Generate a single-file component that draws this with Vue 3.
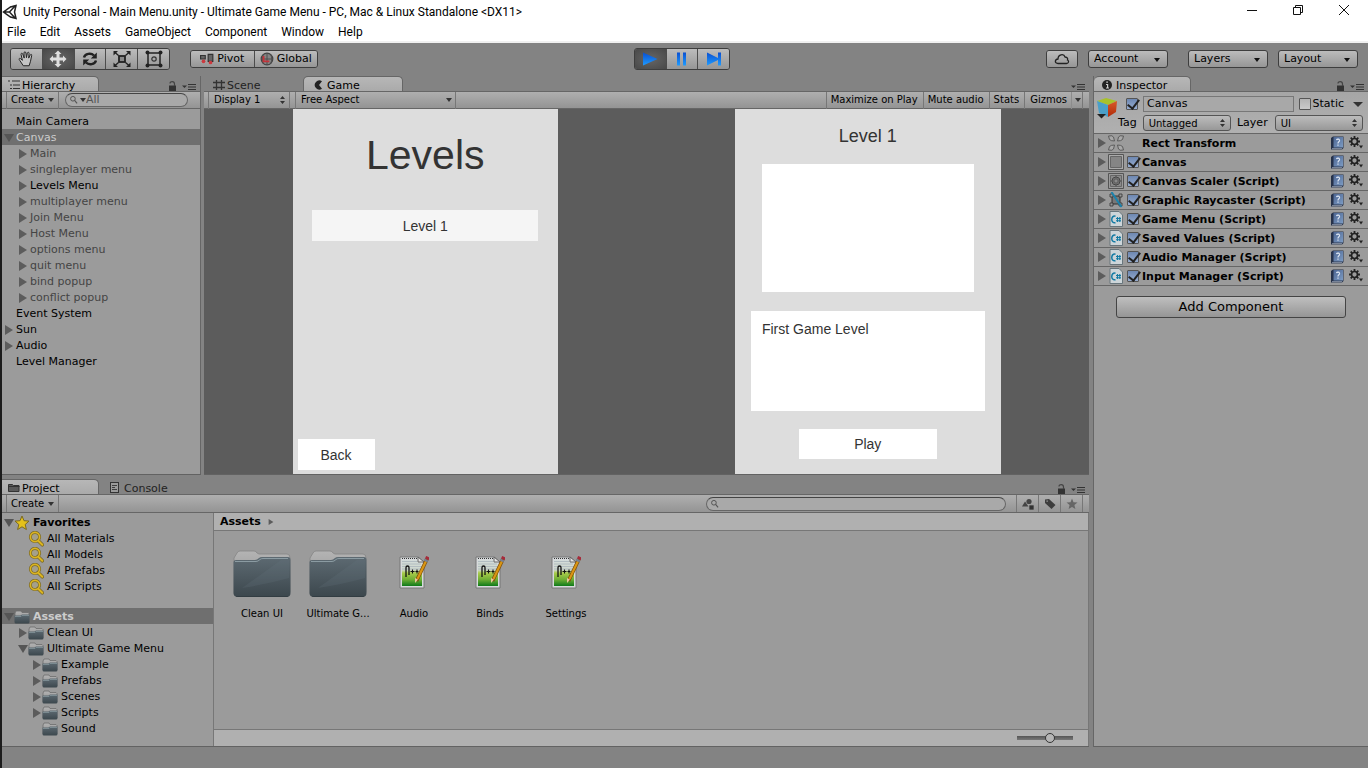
<script setup>
import { ref } from 'vue'

const menus = ['File', 'Edit', 'Assets', 'GameObject', 'Component', 'Window', 'Help']
const tools = ['hand', 'move', 'rotate', 'scale', 'rect']
const plays = ['play', 'pause', 'step']
const hierarchy = [
  { name: 'Main Camera', level: 0 },
  { name: 'Canvas', level: 0, arrow: 'open', selected: true },
  { name: 'Main', level: 1, arrow: 'closed', dim: true },
  { name: 'singleplayer menu', level: 1, arrow: 'closed', dim: true },
  { name: 'Levels Menu', level: 1, arrow: 'closed' },
  { name: 'multiplayer menu', level: 1, arrow: 'closed', dim: true },
  { name: 'Join Menu', level: 1, arrow: 'closed', dim: true },
  { name: 'Host Menu', level: 1, arrow: 'closed', dim: true },
  { name: 'options menu', level: 1, arrow: 'closed', dim: true },
  { name: 'quit menu', level: 1, arrow: 'closed', dim: true },
  { name: 'bind popup', level: 1, arrow: 'closed', dim: true },
  { name: 'conflict popup', level: 1, arrow: 'closed', dim: true },
  { name: 'Event System', level: 0 },
  { name: 'Sun', level: 0, arrow: 'closed' },
  { name: 'Audio', level: 0, arrow: 'closed' },
  { name: 'Level Manager', level: 0 }
]
const favorites = [
  { name: 'Favorites', level: 0, arrow: 'open', icon: 'star', bold: true },
  { name: 'All Materials', level: 1, icon: 'lens' },
  { name: 'All Models', level: 1, icon: 'lens' },
  { name: 'All Prefabs', level: 1, icon: 'lens' },
  { name: 'All Scripts', level: 1, icon: 'lens' }
]
const folders = [
  { name: 'Assets', level: 0, arrow: 'open', icon: 'folder', bold: true, selected: true },
  { name: 'Clean UI', level: 1, arrow: 'closed', icon: 'folder' },
  { name: 'Ultimate Game Menu', level: 1, arrow: 'open', icon: 'folder' },
  { name: 'Example', level: 2, arrow: 'closed', icon: 'folder' },
  { name: 'Prefabs', level: 2, arrow: 'closed', icon: 'folder' },
  { name: 'Scenes', level: 2, arrow: 'closed', icon: 'folder' },
  { name: 'Scripts', level: 2, arrow: 'closed', icon: 'folder' },
  { name: 'Sound', level: 2, icon: 'folder' }
]
const assets = [
  { name: 'Clean UI', icon: 'bigfolder' },
  { name: 'Ultimate G...', icon: 'bigfolder' },
  { name: 'Audio', icon: 'doc' },
  { name: 'Binds', icon: 'doc' },
  { name: 'Settings', icon: 'doc' }
]
const components = ref([
  { name: 'Rect Transform', icon: 'c-rect' },
  { name: 'Canvas', icon: 'c-canvas', on: true },
  { name: 'Canvas Scaler (Script)', icon: 'c-scaler', on: true },
  { name: 'Graphic Raycaster (Script)', icon: 'c-ray', on: true },
  { name: 'Game Menu (Script)', icon: 'c-cs', on: true },
  { name: 'Saved Values (Script)', icon: 'c-cs', on: true },
  { name: 'Audio Manager (Script)', icon: 'c-cs', on: true },
  { name: 'Input Manager (Script)', icon: 'c-cs', on: true }
])
const activeTool = ref('move')
const objectName = ref('Canvas')
const objectOn = ref(true)
const isStatic = ref(false)
const zoom = ref(60)
</script>

<template>
  <div class="app">
    <svg class="defs" aria-hidden="true">
      <defs>
        <linearGradient id="g-folder" x1="0" y1="0" x2="0" y2="1"><stop offset="0" stop-color="#5d6a72" /><stop offset="1" stop-color="#3c474d" /></linearGradient>
        <linearGradient id="g-tab" x1="0" y1="0" x2="0" y2="1"><stop offset="0" stop-color="#b4b4b4" /><stop offset="1" stop-color="#8c8c8c" /></linearGradient>
        <linearGradient id="g-green" x1="0" y1="0" x2="0" y2="1"><stop offset="0" stop-color="#d4dcda" /><stop offset=".38" stop-color="#cfd8cc" /><stop offset=".5" stop-color="#a9cc4a" /><stop offset=".75" stop-color="#6fae35" /><stop offset="1" stop-color="#0f7a1a" /></linearGradient>
        <linearGradient id="g-blue" x1="0" y1="0" x2="0" y2="1"><stop offset="0" stop-color="#0a4fd0" /><stop offset="1" stop-color="#1e9bff" /></linearGradient>
        <linearGradient id="g-book" x1="0" y1="0" x2="1" y2="1"><stop offset="0" stop-color="#4c6592" /><stop offset="1" stop-color="#7d9cc4" /></linearGradient>
        <linearGradient id="g-red" x1="0" y1="0" x2="0" y2="1"><stop offset="0" stop-color="#d85a28" /><stop offset="1" stop-color="#b02a08" /></linearGradient>
      </defs>
      <symbol id="i-closed" viewBox="0 0 10 10"><path d="M1 0v10l8-5z" fill="#5c5c5c" /></symbol>
      <symbol id="i-open" viewBox="0 0 10 10"><path d="M0 1h10L5 9z" fill="#555" /></symbol>
      <symbol id="i-unity" viewBox="0 0 16 16"><path d="M14 1.500 8.500 3 1.500 8l7 5 5.500 1.500L12.500 8z M2 8h5.500M7.500 8l5.500-6M7.500 8l5.500 6M4 6l5-3.500M4 10l5 3.500" fill="none" stroke="#222" stroke-width="1.500" /></symbol>
      <symbol id="i-hand" viewBox="0 0 20 18"><path d="M7 16.500 3 10.500c-1.500-2 0-3 1.500-1.500L6 10.500 4.500 4c-.3-1.600 1.400-1.900 1.900-.5L8 8 7.800 2.300c0-1.700 1.900-1.700 2.100 0L10.500 7.500l1-5c.4-1.500 2-1.200 1.900.4L13 8l1.700-3.500c.7-1.300 2-.6 1.600.8L15 11.500l-1.500 5z" fill="#c4c4c4" stroke="#222" stroke-width="1.100" /></symbol>
      <symbol id="i-move" viewBox="0 0 18 18"><path d="M9 .5 12.500 4H10.500v3.500H14V5.500L17.500 9 14 12.500v-2h-3.500V14h2L9 17.500 5.500 14h2v-3.500H4v2L.5 9 4 5.500v2h3.500V4h-2z" fill="#dedede" /></symbol>
      <symbol id="i-rotate" viewBox="0 0 18 18"><path d="M3 7.500C4 3.500 10 2.500 13 5.500M15 10.500C14 14.500 8 15.500 5 12.500" fill="none" stroke="#222" stroke-width="2.400" /><path d="M15.800 2.500v6h-6zM2.200 15.500v-6h6z" fill="#222" /></symbol>
      <symbol id="i-scale" viewBox="0 0 18 18"><rect x="6" y="6" width="6" height="6" fill="#888" stroke="#222" stroke-width="1.800" /><path d="m1.500 2 4 3.500M16.500 2l-4 3.500M1.500 16l4-3.500M16.500 16l-4-3.500" stroke="#222" stroke-width="1.300" /><path d="M.5 1H5L.5 5.500zM17.500 1H13l4.500 4.500zM.5 17H5L.5 12.500zM17.500 17H13l4.500-4.500z" fill="#222" /></symbol>
      <symbol id="i-rect" viewBox="0 0 18 18"><rect x="3" y="3" width="12" height="12" fill="none" stroke="#222" stroke-width="1.500" /><g fill="#222"><circle cx="2.500" cy="2.500" r="2" /><circle cx="15.500" cy="2.500" r="2" /><circle cx="2.500" cy="15.500" r="2" /><circle cx="15.500" cy="15.500" r="2" /></g><circle cx="9" cy="9" r="2.200" fill="none" stroke="#333" stroke-width="1.200" /></symbol>
      <symbol id="i-play" viewBox="0 0 18 18"><path d="M2 2.500v13L16.500 9z" fill="url(#g-blue)" /></symbol>
      <symbol id="i-pause" viewBox="0 0 18 18"><path d="M4 2.500h3v13H4zM10 2.500h3v13h-3z" fill="url(#g-blue)" /></symbol>
      <symbol id="i-step" viewBox="0 0 18 18"><path d="M2 2.500v13L13 10v5.500h3v-13h-3V8z" fill="url(#g-blue)" /></symbol>
      <symbol id="i-pivot" viewBox="0 0 12 10"><path d="M.5 2h4v3h-4zM7 1h4v6H7z" fill="#666" stroke="#333" /><circle cx="3" cy="7" r="1.600" fill="#cc3a3f" /><circle cx="9" cy="8" r="1.600" fill="#cc3a3f" /></symbol>
      <symbol id="i-global" viewBox="0 0 12 12"><circle cx="6" cy="6" r="5" fill="#848484" stroke="#444" /><path d="M1 6h10M6 1v10M3 2c-1.500 3-1.500 5 0 8M9 2c1.500 3 1.500 5 0 8" fill="none" stroke="#4b4b4b" stroke-width=".8" /><path d="M3 3.500v4.500h5" fill="none" stroke="#c4333a" stroke-width="1.600" /></symbol>
      <symbol id="i-cloud" viewBox="0 0 16 12"><path d="M4 10.500C.5 10.500.5 6.500 4 6c0-5 6-5.500 7-2 2.500.2 3 2 2.500 3 2 1 1 3.500-1 3.500z" fill="none" stroke="#222" stroke-width="1.300" /></symbol>
      <symbol id="i-list" viewBox="0 0 12 10"><path d="M0 1h2M4 1h8M2 5h2M5 5h7M2 8.500h2M5 8.500h7" stroke="#333" stroke-width="1.200" /></symbol>
      <symbol id="i-scene" viewBox="0 0 12 12"><path d="M3.500 1v10M8.500 1v10M0 3.500h12M0 8.500h12" stroke="#333" stroke-width="1.300" /></symbol>
      <symbol id="i-game" viewBox="0 0 10 10"><path d="M8 1.200A4.600 4.600 0 1 0 8 8.800L5 5z" fill="#222" /></symbol>
      <symbol id="i-info" viewBox="0 0 10 10"><circle cx="5" cy="5" r="5" fill="#222" /><path d="M4 4.500h1.600V8M4 8h3M4.300 2.200h1.600" stroke="#ccc" stroke-width="1.200" fill="none" /></symbol>
      <symbol id="i-proj" viewBox="0 0 12 10"><path d="M.5 8.500v-7h4l1 1h5.500v6zM.5 3.500h11" fill="#5a5a5a" stroke="#333" /></symbol>
      <symbol id="i-console" viewBox="0 0 10 12"><rect x=".5" y=".5" width="8" height="10" fill="#9a9a9a" stroke="#333" /><path d="M2 3.500h5M2 5.500h3M2 7.500h5" stroke="#333" stroke-width=".9" /></symbol>
      <symbol id="i-lock" viewBox="0 0 8 10"><path d="M1 4.500h7V10H1z" fill="#333" /><path d="M2 2.500C2 0 6.500 0 6.500 3v2" fill="none" stroke="#444" stroke-width="1.200" /></symbol>
      <symbol id="i-pane" viewBox="0 0 14 7"><path d="M0 2h5L2.500 4.500z" fill="#333" /><path d="M6 1h8M6 3.500h8M6 6h8" stroke="#333" stroke-width="1.200" /></symbol>
      <symbol id="i-search" viewBox="0 0 12 10"><circle cx="3.500" cy="3.500" r="2.800" fill="none" stroke="#555" stroke-width="1.200" /><path d="m5.500 5.500 3 3.500" stroke="#555" stroke-width="1.400" /></symbol>
      <symbol id="i-shapes" viewBox="0 0 12 12"><path d="M0 8.500 3 3.500l3.500 5z" fill="#444" /><circle cx="7" cy="3.500" r="2.600" fill="#444" /><path d="M7 7h5v5H7z" fill="#333" stroke="#999" stroke-width=".7" /></symbol>
      <symbol id="i-tag" viewBox="0 0 12 12"><path d="M1 1.500 5 1l6.500 6L7.500 11 1 5zM2.500 2.500v1.300h1.300V2.500z" fill="#3d3d3d" fill-rule="evenodd" /></symbol>
      <symbol id="i-fav" viewBox="0 0 12 12"><path d="m6 .5 1.500 3.800 4 .2-3.100 2.600 1 4L6 8.900l-3.400 2.200 1-4L.5 4.500l4-.2z" fill="#666" /></symbol>
      <symbol id="i-star" viewBox="0 0 16 16"><path d="m8 1 2 4.700 5 .4-3.800 3.400 1.200 5L8 11.800l-4.400 2.700 1.200-5L1 6.100l5-.4z" fill="#e4c11b" stroke="#7b6a20" /></symbol>
      <symbol id="i-lens" viewBox="0 0 16 16"><circle cx="7" cy="6" r="4.600" fill="#a5a08a" stroke="#7b6a28" stroke-width="3" /><path d="m10 9.500 4.300 4.300" stroke="#7b6a28" stroke-width="3.600" stroke-linecap="round" /><circle cx="7" cy="6" r="4.600" fill="none" stroke="#dcb520" stroke-width="1.600" /><path d="m10.500 10 3.800 3.800" stroke="#dcb520" stroke-width="2" stroke-linecap="round" /></symbol>
      <symbol id="i-folder" viewBox="0 0 16 14"><path d="M1 12V3l1-2h5l1 1.500h6l1 1V12z" fill="url(#g-tab)" stroke="#6c6c6c" stroke-width=".8" /><path d="M.5 5.500h6L8 4.500h7.500V12q0 1.500-1.500 1.500H2Q.5 13.500.5 12z" fill="url(#g-folder)" /><path d="M1 6.500h6L8 5.500h7" fill="none" stroke="#84949b" stroke-width=".8" /></symbol>
      <symbol id="i-bigfolder" viewBox="0 0 58 50"><path d="M1 44V8l3-5q1-2 3-2h14q2 0 3 2l2 1h28q3 0 3 4v34z" fill="url(#g-tab)" stroke="#858585" stroke-width=".8" /><path d="M.5 12q0-2 2.500-2h19q2 0 4-2 1-1 3-1h26q2.500 0 2.500 3v33q0 4-4 4H5q-4.500 0-4.500-4z" fill="url(#g-folder)" /><path d="M2 11.500h21q2 0 4-2 1-1 3-1h25" fill="none" stroke="#8b9ba2" /><path d="M9 38 48 10h8v18Q35 34 9 38" fill="#6b7981" opacity=".2" /><path d="M3 46.500h52" stroke="#2c363b" opacity=".6" /></symbol>
      <symbol id="i-doc" viewBox="0 0 30 34"><path d="M1 1h18l6 5v26H1z" fill="#d7dadc" stroke="#777" /><path d="M3 4h15l5 4v22H3z" fill="url(#g-green)" /><path d="M3 5.500h15M3 8h19M3 10.500h20M3 13h20" stroke="#a9b5bd" stroke-width=".8" /><path d="M3 2.500h15" stroke="#333" stroke-dasharray="1 1" /><path d="M19 1v5h6z" fill="#e5e5e5" stroke="#666" /><path d="M7 21v-9.500q0-1.500 1.500-1.500t1.500 1.500V19" fill="none" stroke="#111" stroke-width="1.300" /><path d="M11.500 15.500h4M13.500 13.500v4M16.500 15.500h3M18 13.500v4" fill="none" stroke="#111" stroke-width="1.100" /><path d="M28 3 17.500 25" stroke="#7c4b09" stroke-width="3.600" /><path d="M27.500 4 18.500 23" stroke="#d99614" stroke-width="2.200" /><path d="m16 22 3 1.500-3 3.500z" fill="#e8c79c" /><path d="m29 .8-1.200 2.500" stroke="#a62a3a" stroke-width="4" /><path d="m27.500 3.500-1 2" stroke="#777f91" stroke-width="4" /></symbol>
      <symbol id="i-cube" viewBox="0 0 22 22"><path d="M1 4 10 1l11 3-9 4z" fill="#a8c22b" /><path d="M1 4l11 4v12L3 16z" fill="#4a9fc8" /><path d="M12 8l9-4-1 11-8 5z" fill="url(#g-red)" /><path d="M1 17h9l-4.500 4.500z" fill="#222" /></symbol>
      <symbol id="i-book" viewBox="0 0 14 14"><path d="M1 2 3 .5h10.500v11.500L12 13.500H1z" fill="#26324a" /><path d="M3.500 1H13v10.500H3.500z" fill="url(#g-book)" /><path d="M2 12.700h10" stroke="#a8b2c4" stroke-width=".8" /><path d="M6.500 4.200c.5-1.700 3.500-1.200 3 .7-.3 1-1.500 1-1.500 2.500M8 8.500v1.300" fill="none" stroke="#dfe7f3" stroke-width="1.200" /></symbol>
      <symbol id="i-gear" viewBox="0 0 14 14"><circle cx="5.500" cy="5.500" r="3" fill="none" stroke="#222" stroke-width="1.700" /><path d="M5.500 0v2.500M5.500 8.500V11M0 5.500h2.500M8.500 5.500H11M1.700 1.700l1.600 1.600M7.700 7.700l1.600 1.600M9.300 1.700 7.700 3.300M3.300 7.700 1.700 9.300" stroke="#222" stroke-width="1.800" /><path d="M10 9.500h4l-2 3z" fill="#222" /></symbol>
      <symbol id="i-c-rect" viewBox="0 0 16 16"><path d="M.5 1q4-1 5 1l1 4Q3 6 1.500 4.500zM15.500 1q-4-1-5 1l-1 4q3.500 0 5-1.500zM.5 15q4 1 5-1l1-4Q3 10 1.500 11.500zM15.500 15q-4 1-5-1l-1-4q3.500 0 5 1.500z" fill="#a8a8a8" stroke="#555" stroke-width=".9" /></symbol>
      <symbol id="i-c-canvas" viewBox="0 0 16 16"><path d="M.5.5h15v15H.5z" fill="#aaa" stroke="#555" /><path d="M2.500 2.500h11v11h-11z" fill="#858585" stroke="#666" /></symbol>
      <symbol id="i-c-scaler" viewBox="0 0 16 16"><path d="M.5.5h15v15H.5z" fill="#9b9b9b" stroke="#555" /><path d="M2.500 2.500h11v11h-11z" fill="#8a8a8a" stroke="#666" /><circle cx="8" cy="8" r="4" fill="none" stroke="#444" /><path d="M6 6h4v4H6zM8 2.500v3M8 10.500v3M2.500 8h3M10.500 8h3" fill="none" stroke="#555" /></symbol>
      <symbol id="i-c-ray" viewBox="0 0 16 16"><path d="M4 4h8v8H4z" fill="#777" stroke="#333" /><path d="M2 2h3v3H2zM11 2h3v3h-3zM2 11h3v3H2zM11 11h3v3h-3z" fill="#999" stroke="#333" stroke-width=".8" /><path d="m3.500 0 10 15" stroke="#1a83ad" stroke-width="2" /></symbol>
      <symbol id="i-c-cs" viewBox="0 0 16 16"><path d="M2 .5h9L14.500 4v11.500H2z" fill="#cdd5d9" stroke="#68767d" /><path d="M7.500 5.200C2.500 4 2.500 13 7.500 11.700" fill="none" stroke="#147ba4" stroke-width="1.500" /><path d="M9.500 6v5M11.800 6v5M8 7.500h5M8 9.700h5" stroke="#147ba4" stroke-width="1.100" /></symbol>
      <symbol id="i-min" viewBox="0 0 12 12"><path d="M1 6.500h10" stroke="#111" /></symbol>
      <symbol id="i-max" viewBox="0 0 12 12"><path d="M1.500 3.500h7v7h-7zM3.500 3.500v-2h7v7h-2" fill="none" stroke="#111" /></symbol>
      <symbol id="i-close" viewBox="0 0 12 12"><path d="m1 1 10 10M11 1 1 11" stroke="#111" /></symbol>
    </svg>

    <header class="titlebar">
      <svg class="s16"><use href="#i-unity" /></svg>
      <h1>Unity Personal - Main Menu.unity - Ultimate Game Menu - PC, Mac &amp; Linux Standalone &lt;DX11&gt;</h1>
      <div class="wincontrols">
        <button v-for="w in ['min', 'max', 'close']" :key="w" :aria-label="w"><svg class="s12"><use :href="'#i-' + w" /></svg></button>
      </div>
    </header>
    <nav class="menubar"><a v-for="m in menus" :key="m" href="#">{{ m }}</a></nav>

    <div class="toolbar">
      <div class="side">
        <div class="group tall tools">
          <button v-for="t in tools" :key="t" :class="{ on: t === activeTool }" :aria-label="t" @click="activeTool = t"><svg class="s18"><use :href="'#i-' + t" /></svg></button>
        </div>
        <div class="group modes">
          <button><svg class="s14"><use href="#i-pivot" /></svg>Pivot</button>
          <button><svg class="s14"><use href="#i-global" /></svg>Global</button>
        </div>
      </div>
      <div class="group tall plays">
        <button v-for="p in plays" :key="p" :class="{ on: p === 'play' }" :aria-label="p"><svg class="s18"><use :href="'#i-' + p" /></svg></button>
      </div>
      <div class="side right">
        <div class="group cloud"><button aria-label="Cloud"><svg class="s16"><use href="#i-cloud" /></svg></button></div>
        <div class="drop"><select aria-label="Account"><option>Account</option></select></div>
        <div class="drop apart"><select aria-label="Layers"><option>Layers</option></select></div>
        <div class="drop"><select aria-label="Layout"><option>Layout</option></select></div>
      </div>
    </div>

    <main class="work">
      <div class="left">
        <div class="upper">
          <section class="panel hier">
            <div class="tabs">
              <button class="tab on"><svg class="s12"><use href="#i-list" /></svg>Hierarchy</button>
              <span class="ends"><svg class="s10"><use href="#i-lock" /></svg><svg class="s14"><use href="#i-pane" /></svg></span>
            </div>
            <div class="bar">
              <button class="cell create">Create<i class="tri" /></button>
              <label class="search small"><svg class="s10"><use href="#i-search" /></svg><i class="tri" /><input type="text" placeholder="All" aria-label="Search hierarchy" /></label>
            </div>
            <ul class="tree hierlist">
              <li v-for="n in hierarchy" :key="n.name" :class="['l' + n.level, { sel: n.selected, dim: n.dim }]">
                <span class="arr"><svg v-if="n.arrow" class="s10"><use :href="'#i-' + n.arrow" /></svg></span>{{ n.name }}
              </li>
            </ul>
          </section>

          <section class="panel game">
            <div class="tabs">
              <button class="tab scene"><svg class="s12"><use href="#i-scene" /></svg>Scene</button>
              <button class="tab on"><svg class="s10"><use href="#i-game" /></svg>Game</button>
              <span class="ends"><svg class="s14"><use href="#i-pane" /></svg></span>
            </div>
            <div class="bar">
              <div class="pick display"><select aria-label="Display"><option>Display 1</option></select><i class="updown" /></div>
              <div class="pick aspect"><select aria-label="Aspect"><option>Free Aspect</option></select><i class="tri" /></div>
              <div class="rightcells">
                <button class="cell">Maximize on Play</button>
                <button class="cell">Mute audio</button>
                <button class="cell">Stats</button>
                <button class="cell gizmos">Gizmos<span class="more"><i class="tri" /></span></button>
              </div>
            </div>
            <div class="view">
              <div class="card levels">
                <h2>Levels</h2>
                <button class="gbtn level">Level 1</button>
                <button class="gbtn back">Back</button>
              </div>
              <div class="card detail">
                <h3>Level 1</h3>
                <div class="preview" />
                <p>First Game Level</p>
                <button class="gbtn playbtn">Play</button>
              </div>
            </div>
          </section>
        </div>

        <section class="panel project">
          <div class="tabs">
            <button class="tab on"><svg class="s12"><use href="#i-proj" /></svg>Project</button>
            <button class="tab"><svg class="s12"><use href="#i-console" /></svg>Console</button>
            <span class="ends"><svg class="s10"><use href="#i-lock" /></svg><svg class="s14"><use href="#i-pane" /></svg></span>
          </div>
          <div class="bar">
            <button class="cell create">Create<i class="tri" /></button>
            <label class="search wide"><svg class="s10"><use href="#i-search" /></svg><input type="text" aria-label="Search assets" /></label>
            <div class="rightcells">
              <button v-for="f in ['shapes', 'tag', 'fav']" :key="f" class="cell icon" :aria-label="f"><svg class="s12"><use :href="'#i-' + f" /></svg></button>
            </div>
          </div>
          <div class="browser">
            <div class="folders">
              <ul v-for="(list, i) in [favorites, folders]" :key="i" class="tree">
                <li v-for="n in list" :key="n.name" :class="['l' + n.level, { sel: n.selected, bold: n.bold }]">
                  <span class="arr"><svg v-if="n.arrow" class="s10"><use :href="'#i-' + n.arrow" /></svg></span>
                  <svg class="s16"><use :href="'#i-' + n.icon" /></svg>{{ n.name }}
                </li>
              </ul>
            </div>
            <div class="content">
              <div class="crumb">Assets<svg class="s6"><use href="#i-closed" /></svg></div>
              <ul class="grid">
                <li v-for="a in assets" :key="a.name"><svg :class="a.icon"><use :href="'#i-' + a.icon" /></svg><span>{{ a.name }}</span></li>
              </ul>
              <div class="foot"><input v-model="zoom" type="range" min="0" max="100" aria-label="Icon size" /></div>
            </div>
          </div>
        </section>
      </div>

      <aside class="panel inspector">
        <div class="tabs">
          <button class="tab on"><svg class="s10"><use href="#i-info" /></svg>Inspector</button>
          <span class="ends"><svg class="s10"><use href="#i-lock" /></svg><svg class="s14"><use href="#i-pane" /></svg></span>
        </div>
        <div class="head">
          <svg class="cube"><use href="#i-cube" /></svg>
          <div class="fields">
            <div class="line one">
              <input v-model="objectOn" class="check" type="checkbox" aria-label="Active" />
              <input v-model="objectName" class="name" type="text" aria-label="Name" />
              <label class="static"><input v-model="isStatic" class="check" type="checkbox" />Static</label>
              <i class="tri big" />
            </div>
            <div class="line two">
              <label for="tag">Tag</label>
              <div class="mini"><select id="tag"><option>Untagged</option></select><i class="updown" /></div>
              <label for="layer" class="layer">Layer</label>
              <div class="mini"><select id="layer"><option>UI</option></select><i class="updown" /></div>
            </div>
          </div>
        </div>
        <ul class="comps">
          <li v-for="c in components" :key="c.name">
            <svg class="s10"><use href="#i-closed" /></svg>
            <svg class="s16"><use :href="'#i-' + c.icon" /></svg>
            <label><span class="slot"><input v-if="c.on !== undefined" v-model="c.on" class="check" type="checkbox" /></span><span class="title">{{ c.name }}</span></label>
            <button aria-label="Help"><svg class="s14"><use href="#i-book" /></svg></button>
            <button aria-label="Settings"><svg class="s14"><use href="#i-gear" /></svg></button>
          </li>
        </ul>
        <button class="add">Add Component</button>
      </aside>
    </main>
    <footer class="status" />
  </div>
</template>

<style>
body { margin: 0; background: #838383; }
</style>

<style scoped>
.app { display: flex; flex-direction: column; min-height: 100vh; box-sizing: border-box; border-left: 2px solid #1c1c1c; background: #838383; color: #000; font: 11px/16px "DejaVu Sans", Verdana, sans-serif; }
.app * { box-sizing: border-box; }
.defs { position: absolute; width: 0; height: 0; }
svg { flex: none; display: block; }
.s6 { width: 6px; height: 6px; }
.s10 { width: 10px; height: 10px; }
.s12 { width: 12px; height: 12px; }
.s14 { width: 14px; height: 14px; }
.s16 { width: 16px; height: 16px; }
.s18 { width: 18px; height: 18px; }
button, select, input { font: inherit; color: inherit; margin: 0; padding: 0; border: 0; background: none; border-radius: 0; appearance: none; outline: 0; }
ul { list-style: none; margin: 0; padding: 0; }
h1, h2, h3, p { margin: 0; font-weight: normal; }
a { color: inherit; text-decoration: none; }
.tri { flex: none; border: 3px solid transparent; border-top: 4px solid #333; border-bottom: 0; }
.tri.big { border-width: 5px 5px 0; }
.updown { flex: none; width: 5px; height: 8px; background: #333; clip-path: polygon(50% 0, 100% 3px, 0 3px, 0 5px, 100% 5px, 50% 100%, 0 5px, 0 3px); }

.titlebar { display: flex; align-items: center; height: 24px; background: #fff; gap: 5px; }
.titlebar h1 { flex: 1; font: 12px/20px Roboto, "Open Sans", sans-serif; }
.wincontrols { display: flex; gap: 34px; padding: 0 18px 4px 0; }
.menubar { display: flex; gap: 14px; height: 19px; padding-left: 5px; background: #fff; border-bottom: 2px solid #f0f0f0; font: 12px/17px Roboto, "Open Sans", sans-serif; }

.toolbar { display: grid; grid-template-columns: 1fr auto 1fr; align-items: center; height: 33px; padding: 0 10px 1px 8px; }
.side { display: flex; align-items: center; gap: 20px; }
.side.right { justify-content: flex-end; gap: 10px; }
.group { display: flex; height: 18px; border: 1px solid #3e3e3e; border-radius: 3px; overflow: hidden; }
.group button { flex: 1; display: flex; align-items: center; justify-content: center; gap: 3px; background: linear-gradient(#bcbcbc, #969696); }
.group button + button { border-left: 1px solid #4c4c4c; }
.group.tall { height: 22px; }
.group button.on { background: radial-gradient(#666, #484848); }
.tools { width: 160px; }
.modes { width: 128px; }
.plays { width: 96px; margin-right: 4px; }
.cloud { width: 32px; }
.drop { position: relative; width: 80px; height: 18px; border: 1px solid #3e3e3e; border-radius: 3px; background: linear-gradient(#bcbcbc, #969696); }
.drop select { width: 100%; height: 16px; padding-left: 5px; line-height: 16px; }
.drop::after { content: ""; position: absolute; right: 7px; top: 7px; border: 3px solid transparent; border-top: 4px solid #111; border-bottom: 0; pointer-events: none; }
.apart { margin-left: 10px; }

.work { flex: 1; display: flex; gap: 4px; }
.left { flex: 1; min-width: 0; display: flex; flex-direction: column; gap: 4px; }
.upper { flex: 400 1 0; display: flex; gap: 3px; }
.panel { display: flex; flex-direction: column; border-bottom: 1px solid #626262; }
.hier { flex: none; width: 199px; border-right: 1px solid #666; background: #9b9b9b; }
.game { flex: 1; min-width: 0; }
.project { flex: 267 1 0; }
.tabs { display: flex; height: 16px; background: #838383; border-bottom: 1px solid #666; }
.tab { display: flex; align-items: center; gap: 2px; width: 97px; padding: 3px 0 0 6px; line-height: 13px; color: #222; }
.tab.on { color: #000; background: linear-gradient(#b7b7b7, #aaa); border-top: 1px solid #666; border-right: 1px solid #666; border-radius: 0 5px 0 0; padding-top: 2px; }
.game .tab.on { width: 100px; border-left: 1px solid #666; border-radius: 5px 5px 0 0; padding-left: 10px; gap: 3px; }
.tab.scene { width: 99px; padding-left: 9px; }
.project .tab + .tab { padding-left: 10px; gap: 3px; }
.inspector .tab.on { padding-left: 8px; gap: 4px; border-radius: 5px 5px 0 0; }
.ends { display: flex; align-items: flex-end; gap: 5px; margin-left: auto; padding-right: 4px; }
.ends svg:last-child { height: 8px; }
.bar { display: flex; align-items: center; height: 17px; background: linear-gradient(#afafaf, #949494); border-bottom: 1px solid #666; font-size: 10px; padding-left: 4px; flex: none; }
.project .bar { height: 18px; }
.cell { display: flex; align-items: center; height: 17px; padding: 0 5px 0 4px; border-left: 1px solid #777; }
.create { width: 53px; justify-content: space-between; padding-right: 4px; border-right: 1px solid #777; }
.search { display: flex; align-items: center; height: 14px; border: 1px solid #666; border-top-color: #444; border-radius: 7px; background: #a9a9a9; padding-left: 4px; color: #555; font-size: 11px; }
.search input { flex: 1; min-width: 0; height: 12px; }
.search input::placeholder { color: #555; opacity: 1; }
.search.small { width: 123px; margin-left: 6px; }
.search.wide { width: 300px; margin-left: auto; }
.rightcells { display: flex; margin-left: auto; }
.rightcells::after { content: ""; width: 6px; border-left: 1px solid #777; }
.project .rightcells { margin-left: 10px; }
.cell.icon { width: 22px; padding: 0; justify-content: center; }
.gizmos { padding-right: 0; padding-left: 5px; }
.more { display: flex; align-items: center; margin-left: 4px; width: 11px; height: 17px; padding-left: 3px; border-left: 1px solid #8c8c8c; }
.pick { display: flex; align-items: center; height: 17px; padding: 0 4px 0 5px; border-left: 1px solid #777; border-right: 1px solid #777; }
.pick select { flex: 1; height: 16px; }
.display { width: 82px; }
.aspect { width: 161px; margin-left: 5px; padding-right: 3px; }

.tree li { display: flex; align-items: center; height: 16px; padding: 2px 0 0 2px; white-space: nowrap; }
.tree .arr { width: 12px; height: 10px; }
.folders .arr { width: 10px; }
.tree .s16 { margin-right: 3px; }
.tree .l1 { padding-left: 16px; }
.tree .l2 { padding-left: 30px; }
.tree .sel { background: #6f6f6f; color: #ccc; }
.tree .dim { color: #444; }
.tree .bold { font-weight: bold; }
.hierlist { padding-top: 4px; }

.view { flex: 1; display: flex; justify-content: space-between; padding: 0 10%; background: #5c5c5c; color: #333; font-family: "Liberation Sans", Arial, sans-serif; font-size: 14px; }
.card { display: flex; flex-direction: column; align-items: center; width: 37.5%; padding-top: 1px; background: #ddd; }
.levels { padding-bottom: 4px; }
.levels h2 { font-size: 41px; line-height: 48px; margin-top: 21px; }
.gbtn { height: 31px; background: #fff; }
.gbtn.level { width: 85%; margin-top: 31px; background: #f5f5f5; }
.gbtn.back { width: 77px; margin: auto auto 0 5px; }
.detail h3 { font-size: 18px; line-height: 20px; margin-top: 16px; }
.preview { width: 80%; height: 35%; margin-top: 18px; background: #fff; }
.detail p { width: 88%; flex: 1; margin: 19px 0 18px; padding: 10px 11px; line-height: 16px; background: #fff; }
.gbtn.playbtn { width: 52%; height: 30px; margin-bottom: 15px; }

.browser { flex: 1; display: flex; background: #9b9b9b; }
.folders { width: 212px; border-right: 1px solid #777; display: flex; flex-direction: column; gap: 14px; padding-top: 1px; }
.content { flex: 1; display: flex; flex-direction: column; border-right: 1px solid #777; }
.crumb { display: flex; align-items: center; gap: 7px; height: 18px; padding: 1px 0 0 6px; font-weight: bold; background: #b0b0b0; border-bottom: 1px solid #777; }
.grid { flex: 1; display: flex; flex-wrap: wrap; align-content: flex-start; padding: 19px 10px; font-size: 10px; }
.grid li { display: flex; flex-direction: column; align-items: center; justify-content: space-between; width: 76px; height: 72px; }
.bigfolder { width: 58px; height: 50px; }
.doc { width: 30px; height: 34px; margin-top: 6px; }
.foot { display: flex; align-items: center; justify-content: flex-end; height: 17px; padding-right: 15px; background: #b0b0b0; border-top: 1px solid #777; }
.foot input { width: 56px; height: 10px; background: linear-gradient(#555, #777) center / 100% 4px no-repeat; }
.foot input::-webkit-slider-thumb { appearance: none; width: 10px; height: 10px; border: 1px solid #333; border-radius: 50%; background: #b5b5b5; }

.inspector { flex: none; width: 275px; background: #9b9b9b; border-left: 1px solid #666; }
.head { display: flex; padding: 4px 5px 2px 2px; gap: 8px; background: linear-gradient(#a6a6a6, #b0b0b0); border-bottom: 1px solid #666; }
.cube { width: 22px; height: 22px; margin-top: 1px; }
.fields { flex: 1; min-width: 0; display: flex; flex-direction: column; gap: 3px; }
.line { display: flex; align-items: center; }
.line.one { gap: 5px; }
.line.two { gap: 6px; margin-left: -8px; }
.check { flex: none; position: relative; width: 12px; height: 12px; border: 1px solid #555; border-radius: 1px; background: linear-gradient(#b4b4b4, #cacaca); }
.check:checked { background: linear-gradient(#6d87b1, #97add0); }
.check:checked::after { content: ""; position: absolute; left: 3px; top: -2px; width: 5px; height: 10px; border: solid #222; border-width: 0 2px 2px 0; transform: rotate(38deg); }
.name { flex: 1; min-width: 0; height: 16px; padding-left: 3px; border: 1px solid #777; background: #a8a8a8; }
.static { display: flex; align-items: center; gap: 2px; margin-right: 4px; }
.mini { display: flex; align-items: center; flex: 1; height: 16px; padding: 0 5px; border: 1px solid #555; border-radius: 3px; background: linear-gradient(#bcbcbc, #989898); font-size: 10px; }
.mini select { flex: 1; min-width: 0; height: 14px; }
.layer { margin-right: 1px; }
.comps li { display: flex; align-items: center; height: 19px; padding: 0 5px 0 3px; border-bottom: 1px solid #666; font-weight: bold; }
.comps li > svg + svg { margin-left: 1px; }
.comps label { flex: 1; display: flex; align-items: center; white-space: nowrap; }
.slot { display: flex; width: 18px; padding-left: 3px; }
.title { padding-top: 2px; }
.comps button { margin-left: 5px; }
.add { width: 230px; height: 22px; margin: 10px auto; border: 1px solid #444; border-radius: 3px; background: linear-gradient(#bfbfbf, #959595); font-size: 13px; line-height: 20px; }
.status { height: 21px; }
</style>
